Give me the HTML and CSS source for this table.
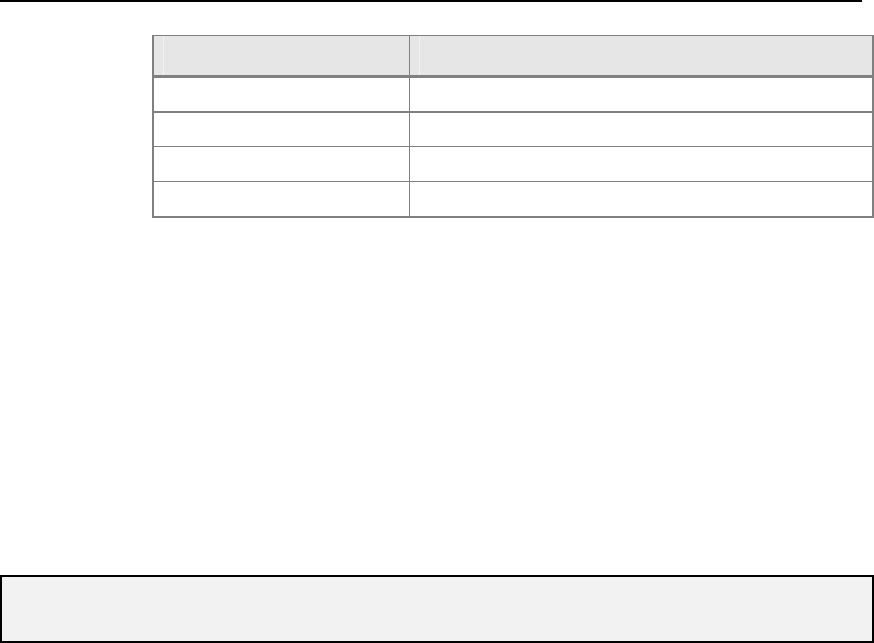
FILE: index.html
```html
<!DOCTYPE html>
<html>
<head>
<meta charset="utf-8">
<link rel="stylesheet" href="styles.css">
</head>
<body>
<div class="page">
  <div class="rule"></div>
  <table class="grid">
    <thead>
      <tr class="head">
        <th class="c1"><div class="hl"></div></th>
        <th class="c2"><div class="hl"></div></th>
      </tr>
    </thead>
    <tbody>
      <tr class="r1"><td class="c1"></td><td class="c2"></td></tr>
      <tr class="r2"><td class="c1"></td><td class="c2"></td></tr>
      <tr class="r3"><td class="c1"></td><td class="c2"></td></tr>
      <tr class="r4"><td class="c1"></td><td class="c2"></td></tr>
    </tbody>
  </table>
  <div class="note"></div>
</div>
</body>
</html>
```
FILE: styles.css
```css
html, body {
  margin: 0;
  padding: 0;
  background: #ffffff;
  font-family: "Liberation Sans", Arial, sans-serif;
}
.page {
  width: 874px;
  height: 643px;
  display: flex;
  flex-direction: column;
  overflow: hidden;
}
.rule {
  width: 862px;
  height: 2px;
  background: #000000;
  flex: none;
}
.grid {
  flex: none;
  margin-top: 33px;
  margin-left: 152px;
  width: 722px;
  border-collapse: separate;
  border-spacing: 0;
  border-left: 2px solid #808080;
  border-right: 2px solid #808080;
  border-top: 1px solid #808080;
}
.grid th, .grid td {
  padding: 0;
  border-bottom: 1px solid #808080;
}
.grid .c1 {
  width: 255px;
  border-right: 1px solid #808080;
}
.head th {
  height: 39px;
  background: #e6e6e6;
  border-bottom: 3px solid #808080;
  vertical-align: top;
}
.hl {
  margin-left: 9px;
  width: 1px;
  height: 39px;
  background: #f3f3f3;
}
.r1 td { height: 33px; border-bottom-width: 2px; }
.r2 td { height: 33px; }
.r3 td { height: 34px; }
.r4 td { height: 34px; border-bottom-width: 2px; }
.note {
  flex: none;
  margin-top: 357px;
  width: 870px;
  height: 64px;
  border: 2px solid #000000;
  background: #f2f2f2;
}
```
